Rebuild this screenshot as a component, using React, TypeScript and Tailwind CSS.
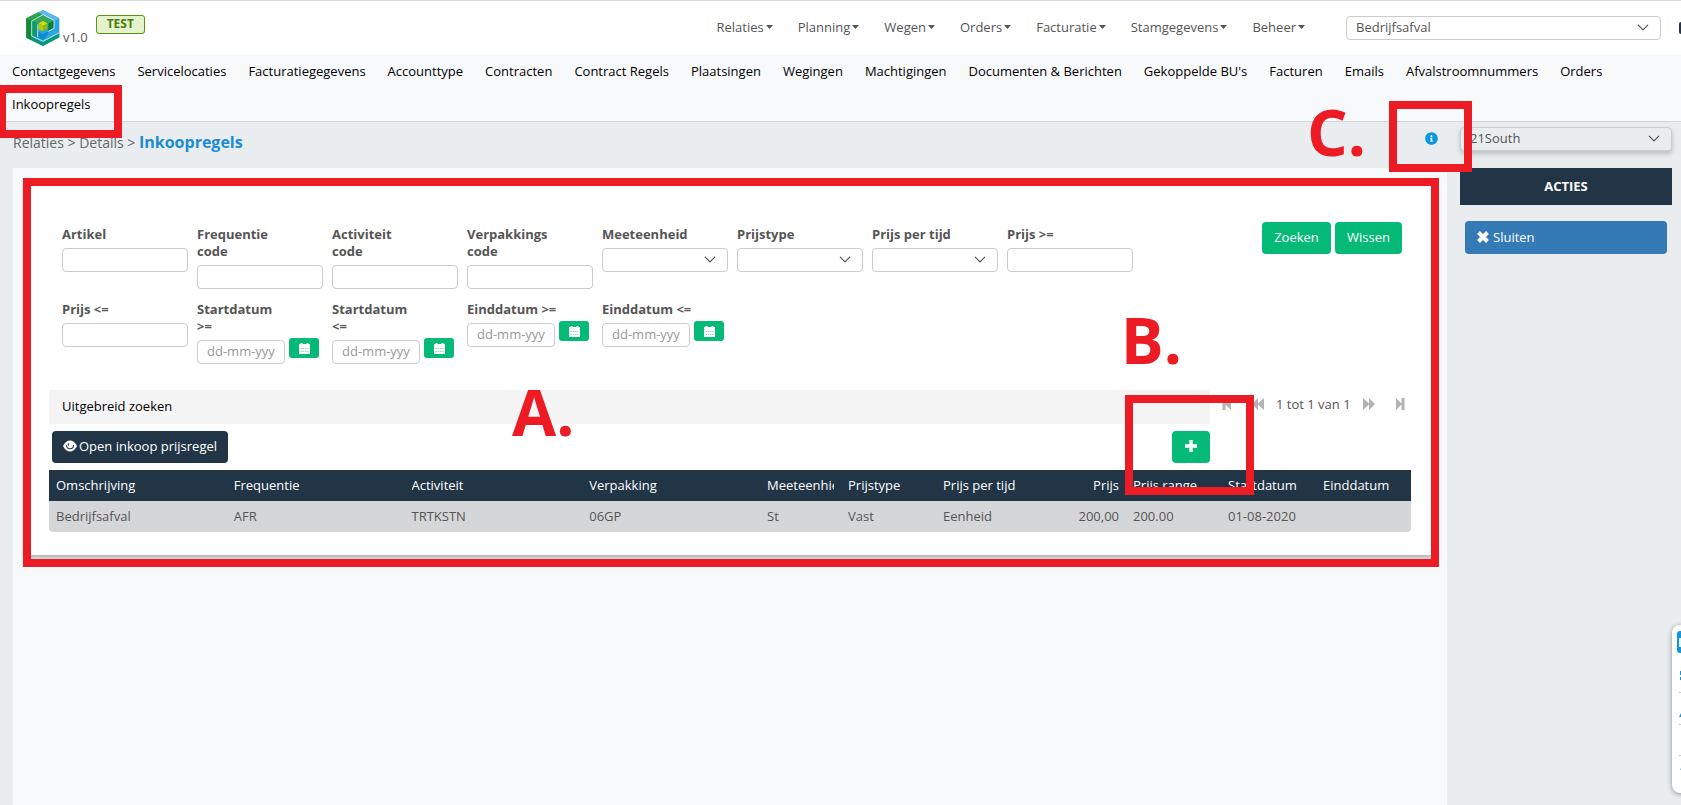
import { FaInfoCircle } from "react-icons/fa";

const MENU = ["Relaties", "Planning", "Wegen", "Orders", "Facturatie", "Stamgegevens", "Beheer"];

const TABS = [
  "Contactgegevens", "Servicelocaties", "Facturatiegegevens", "Accounttype", "Contracten",
  "Contract Regels", "Plaatsingen", "Wegingen", "Machtigingen", "Documenten & Berichten",
  "Gekoppelde BU's", "Facturen", "Emails", "Afvalstroomnummers", "Orders", "Inkoopregels",
];

const FIELDS = [
  { id: "artikel", label: "Artikel", type: "text" },
  { id: "frequentie", label: "Frequentie code", type: "text" },
  { id: "activiteit", label: "Activiteit code", type: "text" },
  { id: "verpakking", label: "Verpakkings code", type: "text" },
  { id: "meeteenheid", label: "Meeteenheid", type: "select" },
  { id: "prijstype", label: "Prijstype", type: "select" },
  { id: "prijs-tijd", label: "Prijs per tijd", type: "select" },
  { id: "prijs-min", label: "Prijs >=", type: "text" },
  { id: "prijs-max", label: "Prijs <=", type: "text" },
  { id: "start-min", label: "Startdatum >=", type: "date" },
  { id: "start-max", label: "Startdatum <=", type: "date" },
  { id: "eind-min", label: "Einddatum >=", type: "date" },
  { id: "eind-max", label: "Einddatum <=", type: "date" },
];

const COLUMNS = [
  { name: "Omschrijving", value: "Bedrijfsafval", col: "" },
  { name: "Frequentie", value: "AFR", col: "" },
  { name: "Activiteit", value: "TRTKSTN", col: "" },
  { name: "Verpakking", value: "06GP", col: "" },
  { name: "Meeteenhied", value: "St", col: "w-[81px]" },
  { name: "Prijstype", value: "Vast", col: "w-[95px]" },
  { name: "Prijs per tijd", value: "Eenheid", col: "w-[95px]" },
  { name: "Prijs", value: "200,00", col: "w-[95px]", right: true },
  { name: "Prijs range", value: "200.00", col: "w-[95px]" },
  { name: "Startdatum", value: "01-08-2020", col: "w-[95px]" },
  { name: "Einddatum", value: "", col: "w-[95px]" },
];

function Logo() {
  return (
    <svg viewBox="0 0 100 108" className="h-9 w-[34px]" aria-label="Logo">
      <path d="M0 25 50 0 99 25V82L50 108 0 83Z" fill="#2fa4df" />
      <path d="M50 0 99 25 84 34 36 8Z" fill="#5bb8ea" />
      <path d="M0 25 36 7 50 14 16 33V91L0 83Z" fill="#2ba24c" />
      <path d="M0 25 15 33V91L0 83Z" fill="#128a35" />
      <path d="M17 80 50 96 99 70V82L50 108 15 91Z" fill="#079a72" />
      <path d="M18 32 50 15 82 32V54L66 62V41L50 32 34 41V84L18 76Z" fill="#1b9150" />
      <path d="M18 32 50 15 82 32 66 41 50 32 34 41Z" fill="#35a75c" />
      <path d="M66 41 82 32V54L66 62Z" fill="#0d7c3a" />
      <path d="M18 32 34 41V84L18 76Z" fill="#0e9a6c" />
      <path d="M34 64 50 72 66 64V72L50 90 34 82Z" fill="#0e8bd0" />
      <path d="M50 33 63 40V57L50 64 37 57V40Z" fill="#8fb800" />
      <path d="M50 33 63 40 50 47 37 40Z" fill="#d0dc16" />
      <path d="M37 40 50 47V64L37 57Z" fill="#b0cb08" />
      <path d="M16 34V78L50 94 99 68M16 33 50 14 83 31V55L66 64M34 43V82" fill="none" stroke="#d5f0f0" strokeWidth="2.500" />
    </svg>
  );
}

function Chevron() {
  return (
    <svg viewBox="0 0 12 7" className="h-[7px] w-3 shrink-0" fill="none" stroke="#555" aria-hidden="true">
      <path d="M1 .8 6 5.8 11 .8" strokeWidth="1.2" />
    </svg>
  );
}

function Cross() {
  return (
    <svg viewBox="0 0 12 12" className="h-3 w-3" aria-hidden="true">
      <path d="M1.500 1.500 10.500 10.500M10.500 1.500 1.500 10.500" stroke="#fff" strokeWidth="4" />
    </svg>
  );
}

function Eye() {
  return (
    <svg viewBox="0 0 14 12" className="h-3 w-3.5" aria-hidden="true">
      <path d="M0 6C2 2 4.500.5 7 .5S12 2 14 6C12 10 9.500 11.500 7 11.500S2 10 0 6Z" fill="#fff" />
      <path d="M3.500 5C3.500 10 10.500 10 10.500 5M6 3.500C5.200 4 5.200 5 5.600 5.500" fill="none" stroke="#213547" strokeWidth="1.100" />
    </svg>
  );
}

function Calendar() {
  return (
    <svg viewBox="0 0 11 11" className="h-[11px] w-[11px]" aria-hidden="true">
      <path d="M0 1H1.500V0H3.500V1H7.500V0H9.500V1H11V11H0Z" fill="#fff" />
      <path d="M1.500 5.500H9.500M1.500 8.500H9.500" stroke="#8fdfc2" strokeDasharray="1.500 .7" />
    </svg>
  );
}

// One shape for both ends of the pager, mirrored for the left side.
function PagerIcon({ end, flip }: { end?: boolean; flip?: boolean }) {
  return (
    <svg viewBox="0 0 12 12" className={flip ? "h-3 w-3 -scale-x-100" : "h-3 w-3"} fill="#b3b3b3" aria-hidden="true">
      {end ? <path d="M2 0 7.500 5.500V0H10.500V12H7.500V6.500L2 12Z" /> : <path d="M0 0 6 5.500V0L12 6 6 12V6.500L0 12Z" />}
    </svg>
  );
}

function Select({ id, label, value = "", className }: { id: string; label?: string; value?: string; className: string }) {
  return (
    <div className={`grid items-center rounded border border-[#ccc] ${className}`}>
      <select id={id} aria-label={label} className="col-start-1 row-start-1 h-full w-full appearance-none bg-transparent px-[9px] pb-[3px] outline-none">
        <option>{value}</option>
      </select>
      <span className="pointer-events-none col-start-1 row-start-1 mr-[11px] justify-self-end pb-0.5">
        <Chevron />
      </span>
    </div>
  );
}

function Field({ id, label, type }: { id: string; label: string; type: string }) {
  return (
    <div className="w-[126px]">
      <label htmlFor={id} className="mb-[5px] block w-[92px] font-bold leading-[17px]">{label}</label>
      {type === "text" && <input id={id} type="text" className="block h-6 w-full rounded border border-[#ccc] px-2" />}
      {type === "select" && <Select id={id} className="h-6 bg-white" />}
      {type === "date" && (
        <div className="flex items-start gap-1">
          <input id={id} type="text" placeholder="dd-mm-yyyy" className="h-6 w-[88px] rounded border border-[#ccc] px-[9px] pb-0.5 placeholder:text-[#999]" />
          <button type="button" aria-label={`Kies ${label}`} className="-mt-0.5 flex h-5 w-[30px] items-center justify-center rounded-[3px] bg-[#05b977]">
            <Calendar />
          </button>
        </div>
      )}
    </div>
  );
}

export default function App() {
  return (
    <div className="relative flex min-h-screen flex-col overflow-hidden bg-[#e9edf0] font-['Open_Sans',sans-serif] text-[13px] leading-[18px] text-[#555]">
      <header className="flex h-[55px] items-center border-t border-[#d9dade] bg-white pl-[26px]">
        <Logo />
        <span className="ml-[3px] mt-[18px]">v1.0</span>
        <span className="-mt-2 ml-2 flex h-[19px] w-[49px] items-center justify-center rounded-[3px] border border-[#5b9410] bg-[#e3f3cd] text-xs font-bold text-[#4b800d]">TEST</span>
        <nav className="ml-auto flex gap-[25px] pb-0.5">
          {MENU.map((item) => (
            <button key={item} type="button" className="flex items-center gap-0.5">
              {item}
              <svg viewBox="0 0 7 4" className="h-1 w-[7px]" fill="#555" aria-hidden="true"><path d="M0 0H7L3.500 4Z" /></svg>
            </button>
          ))}
        </nav>
        <Select id="afdeling" label="Afdeling" value="Bedrijfsafval" className="ml-[41px] h-6 w-[315px] bg-white" />
        <span className="ml-[18px] h-3 w-0.5 shrink-0 rounded-l bg-[#213547]" />
      </header>

      <nav className="relative flex flex-wrap border-b border-[#d3d5d8] bg-[#f8f9fb] pr-3 text-black">
        {TABS.map((tab) => (
          <a key={tab} href="#" className="flex h-[33px] items-center pb-0.5 pl-3 pr-2.5">{tab}</a>
        ))}
        <div className="pointer-events-none absolute -bottom-[17px] -left-0.5 z-10 h-[53px] w-[124px] border-8 border-[#ed1c24]" />
      </nav>

      <div className="flex flex-1 gap-[13px] pl-[13px] pr-[9px]">
        <div className="flex min-w-0 flex-1 flex-col">
          <div className="relative flex h-[46px] items-center pb-1.5 pr-[9px]">
            <p className="text-sm text-[#666]">
              Relaties &gt; Details &gt; <b className="text-base text-[#1a8cd0]">Inkoopregels</b>
            </p>
            <button type="button" aria-label="Informatie" className="ml-auto mt-2.5 self-start text-[#0997e0]"><FaInfoCircle size={13} /></button>
            <div className="pointer-events-none absolute -right-[25px] -top-[21px] z-10 h-[71px] w-[83px] border-8 border-[#ed1c24]" />
            <span className="pointer-events-none absolute -top-[22px] right-[81px] z-10 text-[64px] font-bold leading-[64px] text-[#ed1c24]">C.</span>
          </div>

          <main className="flex-1 bg-[#f8f9fb] p-3">
            <section className="relative bg-white px-6 pb-[23px] pt-[42px] shadow-[0_3px_5px_rgba(0,0,0,0.3)]">
              <form className="flex items-start pl-[13px] pr-[9px]">
                <div className="flex flex-1 flex-wrap gap-x-[9px] gap-y-3 pt-1">
                  {FIELDS.map((f) => <Field key={f.id} {...f} />)}
                </div>
                <div className="flex gap-1 text-white">
                  <button type="button" className="h-8 w-[69px] rounded bg-[#05b977] pb-0.5">Zoeken</button>
                  <button type="button" className="h-8 w-[67px] rounded bg-[#05b977] pb-0.5">Wissen</button>
                </div>
              </form>

              <div className="mt-[26px] flex">
                <button type="button" className="h-[34px] flex-1 bg-[#f4f4f4] px-[13px] pb-0.5 text-left text-black">Uitgebreid zoeken</button>
                <div className="flex h-[30px] w-[201px] items-center gap-3 pb-0.5 pl-[11px]">
                  <button type="button" aria-label="Eerste" className="mr-[7px]"><PagerIcon end flip /></button>
                  <button type="button" aria-label="Vorige"><PagerIcon flip /></button>
                  <span className="whitespace-nowrap">1 tot 1 van 1</span>
                  <button type="button" aria-label="Volgende"><PagerIcon /></button>
                  <button type="button" aria-label="Laatste" className="ml-[7px]"><PagerIcon end /></button>
                </div>
              </div>

              <div className="flex justify-between py-[7px] pl-[3px] pr-[201px]">
                <button type="button" className="flex h-8 items-center gap-0.5 rounded bg-[#213547] px-[11px] pb-0.5 text-white">
                  <Eye />
                  Open inkoop prijsregel
                </button>
                <button type="button" aria-label="Toevoegen" className="flex h-8 w-[38px] items-center justify-center rounded bg-[#05b977] pb-0.5">
                  <svg viewBox="0 0 12 12" className="h-3 w-3" fill="#fff" aria-hidden="true"><path d="M4.300 0H7.700V4.300H12V7.700H7.700V12H4.300V7.700H0V4.300H4.300Z" /></svg>
                </button>
              </div>

              <table className="w-full table-fixed">
                <colgroup>
                  {COLUMNS.map((c) => <col key={c.name} className={c.col} />)}
                </colgroup>
                <thead>
                  <tr className="h-[31px] bg-[#213547] text-left text-white">
                    {COLUMNS.map((c) => (
                      <th key={c.name} className={c.right ? "px-[7px] pb-0.5 text-right font-normal" : "px-[7px] pb-0.5 font-normal"}>
                        <div className="overflow-hidden whitespace-nowrap">{c.name}</div>
                      </th>
                    ))}
                  </tr>
                </thead>
                <tbody>
                  <tr className="h-[31px]">
                    {COLUMNS.map((c) => (
                      <td key={c.name} className={c.right ? "bg-[#d5d6d8] px-[7px] pb-0.5 text-right" : "bg-[#d5d6d8] px-[7px] pb-0.5 first:rounded-bl last:rounded-br"}>{c.value}</td>
                    ))}
                  </tr>
                </tbody>
              </table>

              <div className="pointer-events-none absolute -bottom-3 -left-0.5 -right-1 -top-0.5 z-10 border-8 border-[#ed1c24]" />
              <div className="pointer-events-none absolute bottom-[60px] right-[181px] z-10 h-[100px] w-[129px] border-8 border-[#ed1c24]" />
              <span className="pointer-events-none absolute left-[487px] top-[200px] z-10 text-[64px] font-bold leading-[64px] text-[#ed1c24]">A.</span>
              <span className="pointer-events-none absolute right-[253px] top-[128px] z-10 text-[64px] font-bold leading-[64px] text-[#ed1c24]">B.</span>
            </section>
          </main>
        </div>

        <aside className="w-[212px]">
          <div className="h-[46px] pt-[5px]">
            <Select id="vestiging" label="Vestiging" value="21South" className="h-6 bg-[#e9edf0] shadow-[0_3px_5px_rgba(0,0,0,0.2)]" />
          </div>
          <h2 className="flex h-[37px] items-center justify-center bg-[#213547] pb-0.5 font-bold text-white">ACTIES</h2>
          <div className="px-[5px] pt-4">
            <button type="button" className="flex h-[33px] w-full items-center gap-1 rounded bg-[#337ab7] px-3 pb-0.5 text-white">
              <Cross />
              Sluiten
            </button>
          </div>
        </aside>
      </div>

      {/* Docked toolbar, mostly slid off the right edge */}
      <div className="absolute -right-9 top-[625px] flex h-[168px] w-[45px] flex-col rounded-lg bg-white pl-[5px] pt-1.5 shadow-[0_1px_5px_rgba(0,0,0,0.4)]">
        <svg viewBox="0 0 30 150" className="h-[150px] w-[30px]" aria-hidden="true">
          <rect width="30" height="22" rx="3" fill="#0e97dd" />
          <rect x="2" y="7" width="20" height="9" fill="#e5f4fd" />
          <path d="M3 40H8V44H3M3 46H8V49H3M2 86 8 74V86ZM3 138 8 135V143Z" fill="#0e97dd" />
          <path d="M2 61.500H30M2 93.500H30M2 124.500H30" stroke="#ccc" />
        </svg>
      </div>
    </div>
  );
}
